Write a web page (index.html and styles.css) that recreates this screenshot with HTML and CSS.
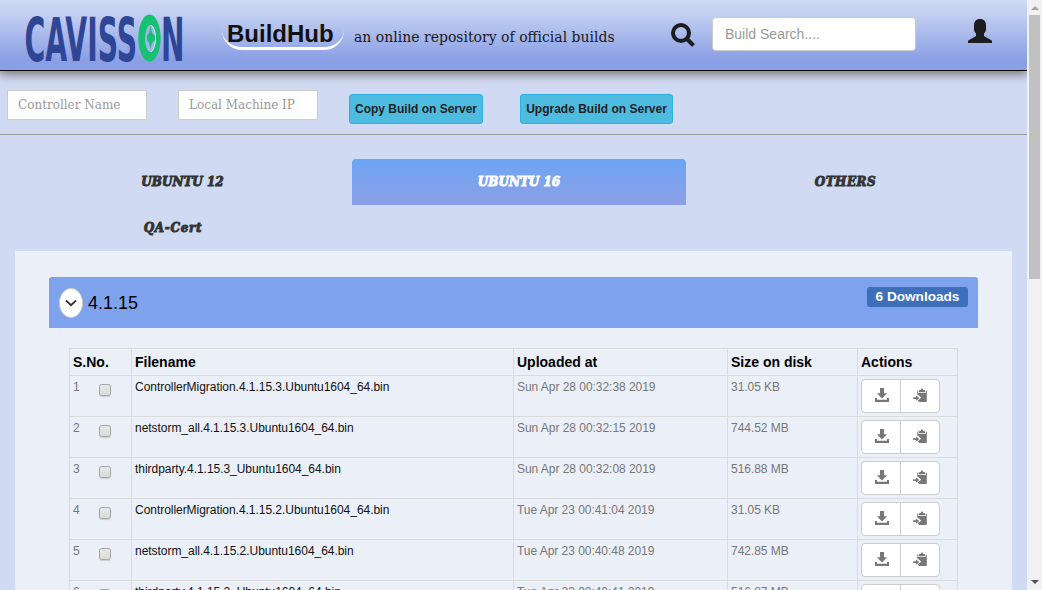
FILE: index.html
```html
<!DOCTYPE html>
<html lang="en">
<head>
<meta charset="utf-8">
<title>BuildHub</title>
<link rel="stylesheet" href="styles.css">
</head>
<body>
<svg class="defs" aria-hidden="true">
  <symbol id="download" viewBox="0 0 14 14"><path d="M5 0h4v5.200h3.100L7 10.400 1.900 5.200H5zM0 10h2v1.800h10V10h2v4H0z"/></symbol>
  <symbol id="paste" viewBox="0 0 14 14"><path d="M6 4.300V3.100c0-.9.400-1.100 1.100-1.100h.7C8 .9 8.400.5 9 .5s1 .4 1.200 1.500h.7c.7 0 1.100.2 1.100 1.100v1.200zM4.300 2.500h1v2.600h7.400V2.500h.3c.5 0 .8.300.8.800v9.900c0 .5-.3.800-.8.800H6.200l-1.500-1.700 3.500-2.500-3.400-3.200-.5.900zM.2 9.300h2.900V7.400l3.200 2.700-3.200 2.700V11H.2z"/></symbol>
</svg>
<div class="window">
  <div class="page">
    <header class="header">
      <svg class="logo" viewBox="0 0 160 52" role="img" aria-label="Cavisson">
        <text transform="translate(-.5 48) scale(.46 1)" textLength="245" lengthAdjust="spacingAndGlyphs">CAVISS</text>
        <ellipse cx="124.500" cy="25" rx="11.200" ry="23.500" fill="#16c172"/>
        <ellipse cx="125.500" cy="25.500" rx="5.500" ry="13.500" fill="#9fb4e9"/>
        <path d="M126 12c6 4 6 22 0 27" fill="none" stroke="#d4e8ee" stroke-width="1"/>
        <path d="M125.500 13l1.500 7 3 3v4l-3 3-1.500 6-1.500-6-2-3v-4l2-3z" fill="#16c172"/>
        <text transform="translate(136 48) scale(.46 1)" textLength="51" lengthAdjust="spacingAndGlyphs">N</text>
      </svg>
      <h1 class="brand">BuildHub</h1>
      <p class="tagline">an online repository of official builds</p>
      <svg class="search-icon" viewBox="0 0 24 24"><circle cx="10" cy="10" r="8"/><path d="M15.500 15.500l7 7"/></svg>
      <input class="search" type="text" placeholder="Build Search....">
      <svg class="user-icon" viewBox="0 0 24 24"><path d="M12 0c4 0 6 2.500 6 6.500v4c0 2-1.200 3-2 4v2c0 1 1 1.200 2 1.700l5 2.700c.8.500 1 .7 1 1.600V24H0v-1.500c0-.9.200-1.100 1-1.600l5-2.700c1-.5 2-.7 2-1.700v-2c-.8-1-2-2-2-4v-4C6 2.500 8 0 12 0z"/></svg>
    </header>
    <div class="toolbar">
      <input class="field" type="text" placeholder="Controller Name">
      <input class="field field-ip" type="text" placeholder="Local Machine IP">
      <button class="action copy">Copy Build on Server</button>
      <button class="action upgrade">Upgrade Build on Server</button>
    </div>
    <nav class="tabs">
      <a class="tab"><span class="tab-text">UBUNTU 12</span></a>
      <a class="tab active"><span class="tab-text">UBUNTU 16</span></a>
      <a class="tab others"><span class="tab-text">OTHERS</span></a>
      <a class="tab qa"><span class="tab-text">QA-Cert</span></a>
    </nav>
    <main class="panel">
      <div class="release">
        <button class="toggle" aria-label="Collapse"><svg viewBox="0 0 12 8"><path d="M1 1.500l5 4.700 5-4.700"/></svg></button>
        <h2 class="version">4.1.15</h2>
        <span class="badge">6 Downloads</span>
      </div>
      <table class="files">
        <colgroup><col class="c1"><col class="c2"><col class="c3"><col class="c4"><col class="c5"></colgroup>
        <thead><tr><th>S.No.</th><th>Filename</th><th>Uploaded at</th><th>Size on disk</th><th>Actions</th></tr></thead>
        <tbody>
          <tr><td><div class="num">1<span class="check"></span></div></td><td class="name">ControllerMigration.4.1.15.3.Ubuntu1604_64.bin</td><td>Sun Apr 28 00:32:38 2019</td><td>31.05 KB</td><td><div class="group"><span class="btn"><svg><use href="#download"/></svg></span><span class="btn"><svg><use href="#paste"/></svg></span></div></td></tr>
          <tr><td><div class="num">2<span class="check"></span></div></td><td class="name">netstorm_all.4.1.15.3.Ubuntu1604_64.bin</td><td>Sun Apr 28 00:32:15 2019</td><td>744.52 MB</td><td><div class="group"><span class="btn"><svg><use href="#download"/></svg></span><span class="btn"><svg><use href="#paste"/></svg></span></div></td></tr>
          <tr><td><div class="num">3<span class="check"></span></div></td><td class="name">thirdparty.4.1.15.3_Ubuntu1604_64.bin</td><td>Sun Apr 28 00:32:08 2019</td><td>516.88 MB</td><td><div class="group"><span class="btn"><svg><use href="#download"/></svg></span><span class="btn"><svg><use href="#paste"/></svg></span></div></td></tr>
          <tr><td><div class="num">4<span class="check"></span></div></td><td class="name">ControllerMigration.4.1.15.2.Ubuntu1604_64.bin</td><td>Tue Apr 23 00:41:04 2019</td><td>31.05 KB</td><td><div class="group"><span class="btn"><svg><use href="#download"/></svg></span><span class="btn"><svg><use href="#paste"/></svg></span></div></td></tr>
          <tr><td><div class="num">5<span class="check"></span></div></td><td class="name">netstorm_all.4.1.15.2.Ubuntu1604_64.bin</td><td>Tue Apr 23 00:40:48 2019</td><td>742.85 MB</td><td><div class="group"><span class="btn"><svg><use href="#download"/></svg></span><span class="btn"><svg><use href="#paste"/></svg></span></div></td></tr>
          <tr><td><div class="num">6<span class="check"></span></div></td><td class="name">thirdparty.4.1.15.2_Ubuntu1604_64.bin</td><td>Tue Apr 23 00:40:41 2019</td><td>516.87 MB</td><td><div class="group"><span class="btn"><svg><use href="#download"/></svg></span><span class="btn"><svg><use href="#paste"/></svg></span></div></td></tr>
        </tbody>
      </table>
    </main>
  </div>
  <div class="scrollbar">
    <span class="arrow up"></span>
    <span class="thumb"></span>
    <span class="arrow down"></span>
  </div>
</div>
</body>
</html>
```
FILE: styles.css
```css
* { box-sizing: border-box; }
html, body { height: 100%; overflow: hidden; }
body { margin: 0; font-family: "Liberation Sans", Arial, sans-serif; font-size: 14px; line-height: 20px; color: #333; }
h1, h2, p { margin: 0; }
.defs { display: none; }
.window { display: flex; height: 590px; overflow: hidden; }
.page { width: 1027px; height: 590px; overflow: hidden; background: #d0dbf3; }

.header { display: flex; align-items: flex-start; height: 71px; border-bottom: 1px solid #000; background: linear-gradient(#d0dbf3 0%, #bdcbf0 26%, #8b9fe5 85%); box-shadow: 0 2px 10px 1px #746e6e; }
.logo { width: 160px; height: 52px; margin: 13px 0 0 25px; overflow: visible; }
.logo text { font: bold 60px "DejaVu Sans", sans-serif; fill: #2f4595; }
.brand { width: 122px; height: 32px; margin: 18px 0 0 37px; padding-left: 5px; border-bottom: 3px solid #fff; border-radius: 0 0 20px 20px; font-size: 24px; line-height: 31px; color: #111; white-space: nowrap; }
.tagline { width: 262px; margin: 27px 0 0 10px; font: 14px/20px "DejaVu Serif", serif; color: #1a1a1a; white-space: nowrap; }
.search-icon { width: 24px; height: 24px; margin: 23px 0 0 55px; fill: none; stroke: #1c1d1f; stroke-width: 4; }
.search { width: 204px; height: 34px; margin: 17px 0 0 17px; padding: 6px 12px; border: 1px solid #ccc; border-radius: 4px; font: 14px "Liberation Sans", sans-serif; }
::placeholder { color: #999; opacity: 1; }
.user-icon { width: 24px; height: 24px; margin: 19px 0 0 52px; fill: #1c1d1f; }

.toolbar { display: flex; align-items: flex-start; height: 64px; padding: 19px 0 0 7px; border-bottom: 1px solid #999; }
.field { width: 140px; height: 30px; padding: 1px 10px; border: 1px solid #ccc; font: 12px "DejaVu Serif", serif; }
.field-ip { margin-left: 31px; }
.action { height: 30px; margin-top: 4px; padding: 0; border: 1px solid #31b0e0; border-radius: 3px; background: #4dbce0; font: bold 12px "Liberation Sans", sans-serif; color: #222; white-space: nowrap; }
.copy { width: 134px; margin-left: 31px; }
.upgrade { width: 153px; margin-left: 37px; }

.tabs { display: grid; grid-template-columns: 335px 334px 315px; column-gap: 2px; grid-auto-rows: 46px; padding: 24px 15px 0; }
.tab { display: flex; align-items: center; justify-content: center; border-radius: 4px 4px 0 0; color: #333; font: italic bold 12px "DejaVu Serif", serif; white-space: nowrap; -webkit-text-stroke: 0.9px currentColor; }
.active { color: #fff; background: linear-gradient(#6da5f5, #8c9fe5); }
.others { letter-spacing: 0.5px; }
.qa { padding-right: 19px; letter-spacing: 0.7px; }

.panel { width: 997px; height: 400px; margin-left: 15px; padding: 26px 34px 0; background: #ebf0f8; }
.release { display: flex; height: 51px; border-radius: 3px 3px 0 0; background: #7ea2ec; padding: 0 10px; }
.toggle { display: flex; align-items: center; justify-content: center; width: 24px; height: 30px; margin-top: 11px; padding: 0; border: 1px solid #ccc; border-radius: 50%; background: #fff; }
.toggle svg { width: 12px; height: 8px; fill: none; stroke: #333; stroke-width: 1.8; }
.version { margin: 16px 0 0 5px; font-size: 18px; font-weight: 400; color: #000; }
.badge { width: 101px; height: 20px; margin: 10px 0 0 auto; border-radius: 3px; background: #3d6fbb; color: #fff; font-size: 13.6px; font-weight: 700; line-height: 20px; text-align: center; white-space: nowrap; }

.files { width: 889px; margin: 20px 0 0 20px; table-layout: fixed; border-collapse: collapse; }
.c1 { width: 62px; } .c2 { width: 382px; } .c3 { width: 214px; } .c4 { width: 130px; } .c5 { width: 100px; }
.files th, .files td { padding: 3px; border: 1px solid #d9dbdd; text-align: left; vertical-align: top; white-space: nowrap; }
.files th { height: 27px; color: #000; }
.files td { height: 41px; font-size: 12px; line-height: 17px; letter-spacing: -0.04px; color: #777; }
.files .name { color: #111; }
.num { display: flex; justify-content: space-between; padding-right: 17px; }
.check { width: 12px; height: 12px; margin-top: 5px; border: 1px solid #a5a5a5; border-radius: 2.5px; background: linear-gradient(#e8e8e8, #d9d9d9); box-shadow: 0 1px 1px #ccc; }
.group { display: flex; width: 79px; height: 34px; border: 1px solid #ccc; border-radius: 4px; background: #fff; }
.btn { display: flex; width: 38px; align-items: center; justify-content: center; padding: 0 0 2px 1px; }
.btn + .btn { width: 39px; padding-left: 0; border-left: 1px solid #ccc; }
.btn svg { width: 14px; height: 14px; fill: #777; }

.scrollbar { display: flex; flex-direction: column; align-items: center; width: 15px; height: 590px; background: #f1f1f1; }
.arrow { border: 4px solid transparent; }
.up { margin-top: 2px; border-bottom-color: #a3a3a3; }
.thumb { width: 11px; height: 264px; margin-top: 5px; background: #c1c1c1; }
.down { margin: auto 0 2px; border-top-color: #505050; }
```
